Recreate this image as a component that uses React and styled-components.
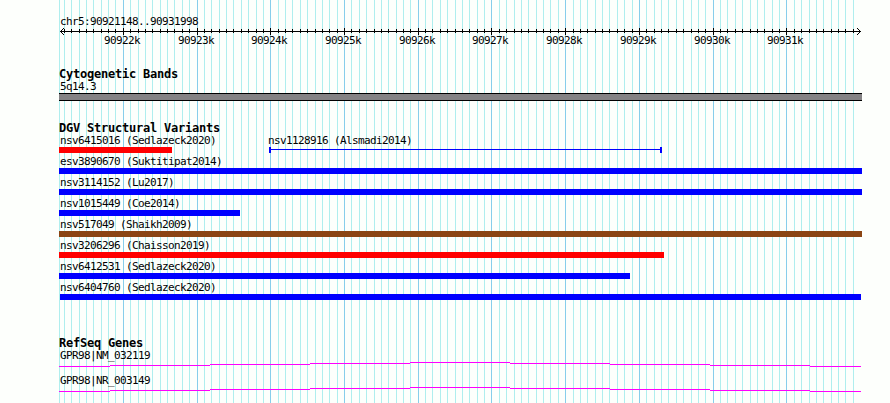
import React from "react";
import styled, { createGlobalStyle } from "styled-components";

const START = 90921148;
const END = 90931998;
const LEFT = 59;
const WIDTH = 803;

const GlobalStyle = createGlobalStyle`
  body {
    margin: 0;
    background: #fdfffc;
  }
`;

const Browser = styled.main`
  position: relative;
  box-sizing: border-box;
  width: 890px;
  height: 403px;
  padding: 15px 0 0 ${LEFT}px;
  overflow: hidden;
  background: #fdfffc;
  color: #000;
  font-family: "DejaVu Sans Mono", monospace;
`;

const GridLines = styled.svg`
  position: absolute;
  top: 0;
  left: 0;
  width: 890px;
  height: 403px;
  shape-rendering: crispEdges;
`;

const Content = styled.div`
  position: relative;
  display: flex;
  flex-direction: column;
  width: ${WIDTH}px;
`;

const Label = styled.div`
  height: ${(props) => props.$height || 13}px;
  margin-left: ${(props) => props.$shift || 0}px;
  padding-left: 1px;
  font-size: 11px;
  line-height: 14px;
  letter-spacing: -0.622px;
  white-space: pre;
`;

const Axis = styled.svg`
  display: block;
  width: ${WIDTH}px;
  height: 40px;
  overflow: visible;
  shape-rendering: crispEdges;

  text {
    font-size: 11px;
    letter-spacing: -0.622px;
  }
`;

const Track = styled.section`
  display: flex;
  flex-direction: column;
  margin-bottom: ${(props) => props.$gap || 0}px;
`;

const Title = styled.h2`
  height: 13px;
  margin: 0;
  font-size: 12px;
  font-weight: bold;
  line-height: 15px;
  letter-spacing: -0.224px;
  white-space: pre;
`;

const Band = styled.div`
  box-sizing: border-box;
  height: 8px;
  border: solid #000;
  border-width: 1px 0;
  background: #848284;
`;

const Row = styled.div`
  display: flex;
  height: 21px;
`;

const Variant = styled.div`
  width: ${(props) => props.$width}px;
  margin-left: ${(props) => props.$offset || 0}px;
  flex-shrink: 0;
`;

const Bar = styled.div`
  height: 6px;
  margin-left: ${(props) => props.$inset || 0}px;
  background: ${(props) => props.$color};
`;

const Span = styled.div`
  box-sizing: border-box;
  display: flex;
  height: 6px;
  padding-top: 2px;
  border: solid #0000ff;
  border-width: 0 2px;

  &::after {
    content: "";
    flex: 1;
    height: 1px;
    background: #0000ff;
  }
`;

const GeneRow = styled.div`
  height: 25px;
`;

const GeneLine = styled.svg`
  display: block;
  width: ${WIDTH}px;
  height: 6px;
  shape-rendering: crispEdges;
`;

const toX = (pos) => Math.round(60 + ((pos - START) * 800) / (END - START));

const ticks = [];
for (let pos = 90921200; pos < END; pos += 100) {
  ticks.push({ pos, x: toX(pos), major: pos % 1000 === 0 });
}

const variants = [
  [
    { name: "nsv6415016 (Sedlazeck2020)", width: 113, color: "#ff0000" },
    { name: "nsv1128916 (Alsmadi2014)", width: 393, offset: 97, span: true },
  ],
  [{ name: "esv3890670 (Suktitipat2014)", width: 803, color: "#0000ff" }],
  [{ name: "nsv3114152 (Lu2017)", width: 803, color: "#0000ff" }],
  [{ name: "nsv1015449 (Coe2014)", width: 181, color: "#0000ff" }],
  [{ name: "nsv517049 (Shaikh2009)", width: 803, color: "#8b4513" }],
  [{ name: "nsv3206296 (Chaisson2019)", width: 605, color: "#ff0000" }],
  [{ name: "nsv6412531 (Sedlazeck2020)", width: 571, color: "#0000ff" }],
  [{ name: "nsv6404760 (Sedlazeck2020)", width: 802, inset: 1, color: "#0000ff" }],
];

const genes = ["GPR98|NM_032119", "GPR98|NR_003149"];

// [start, end, y]
const geneSteps = [
  [0, 51, 4],
  [51, 151, 3],
  [151, 251, 2],
  [251, 351, 1],
  [351, 451, 0],
  [451, 551, 1],
  [551, 651, 2],
  [651, 751, 3],
  [751, 802, 4],
];

const Ruler = () => (
  <Axis>
    <rect x="1" y="4" width="801" height="1" />
    {[0, 1, 2, 3].map((i) => (
      <g key={i}>
        <rect x={1 + i} y={4 - i} width="1" height="1" />
        <rect x={1 + i} y={4 + i} width="1" height="1" />
        <rect x={801 - i} y={4 - i} width="1" height="1" />
        <rect x={801 - i} y={4 + i} width="1" height="1" />
      </g>
    ))}
    {ticks.map((t) => (
      <rect
        key={t.pos}
        x={t.x - LEFT}
        y={t.major ? 1 : 2}
        width="1"
        height={t.major ? 7 : 4}
      />
    ))}
    {ticks
      .filter((t) => t.major)
      .map((t) => (
        <text key={t.pos} x={t.x - LEFT - 19} y="17">
          {t.pos / 1000}k
        </text>
      ))}
  </Axis>
);

const App = () => {
  return (
    <Browser>
      <GlobalStyle />
      <GridLines>
        <rect x={LEFT} y="0" width="1" height="403" fill="#afeeee" />
        {ticks.map((t) => (
          <rect
            key={t.pos}
            x={t.x}
            y="0"
            width="1"
            height="403"
            fill={t.major ? "#87ceeb" : "#afeeee"}
          />
        ))}
      </GridLines>

      <Content>
        <Label $height={12}>
          chr5:{START}..{END}
        </Label>
        <Ruler />

        <Track $gap={20}>
          <Title>Cytogenetic Bands</Title>
          <Label>5q14.3</Label>
          <Band />
        </Track>

        <Track $gap={34}>
          <Title>DGV Structural Variants</Title>
          {variants.map((row) => (
            <Row key={row[0].name}>
              {row.map((v) => (
                <Variant key={v.name} $width={v.width} $offset={v.offset}>
                  <Label $shift={v.span ? -2 : 0}>{v.name}</Label>
                  {v.span ? <Span /> : <Bar $color={v.color} $inset={v.inset} />}
                </Variant>
              ))}
            </Row>
          ))}
        </Track>

        <Track>
          <Title>RefSeq Genes</Title>
          {genes.map((name) => (
            <GeneRow key={name}>
              <Label>{name}</Label>
              <GeneLine>
                {geneSteps.map(([from, to, y]) => (
                  <rect key={from} x={from} y={y} width={to - from} height="1" fill="#ff00ff" />
                ))}
              </GeneLine>
            </GeneRow>
          ))}
        </Track>
      </Content>
    </Browser>
  );
};

export default App;
